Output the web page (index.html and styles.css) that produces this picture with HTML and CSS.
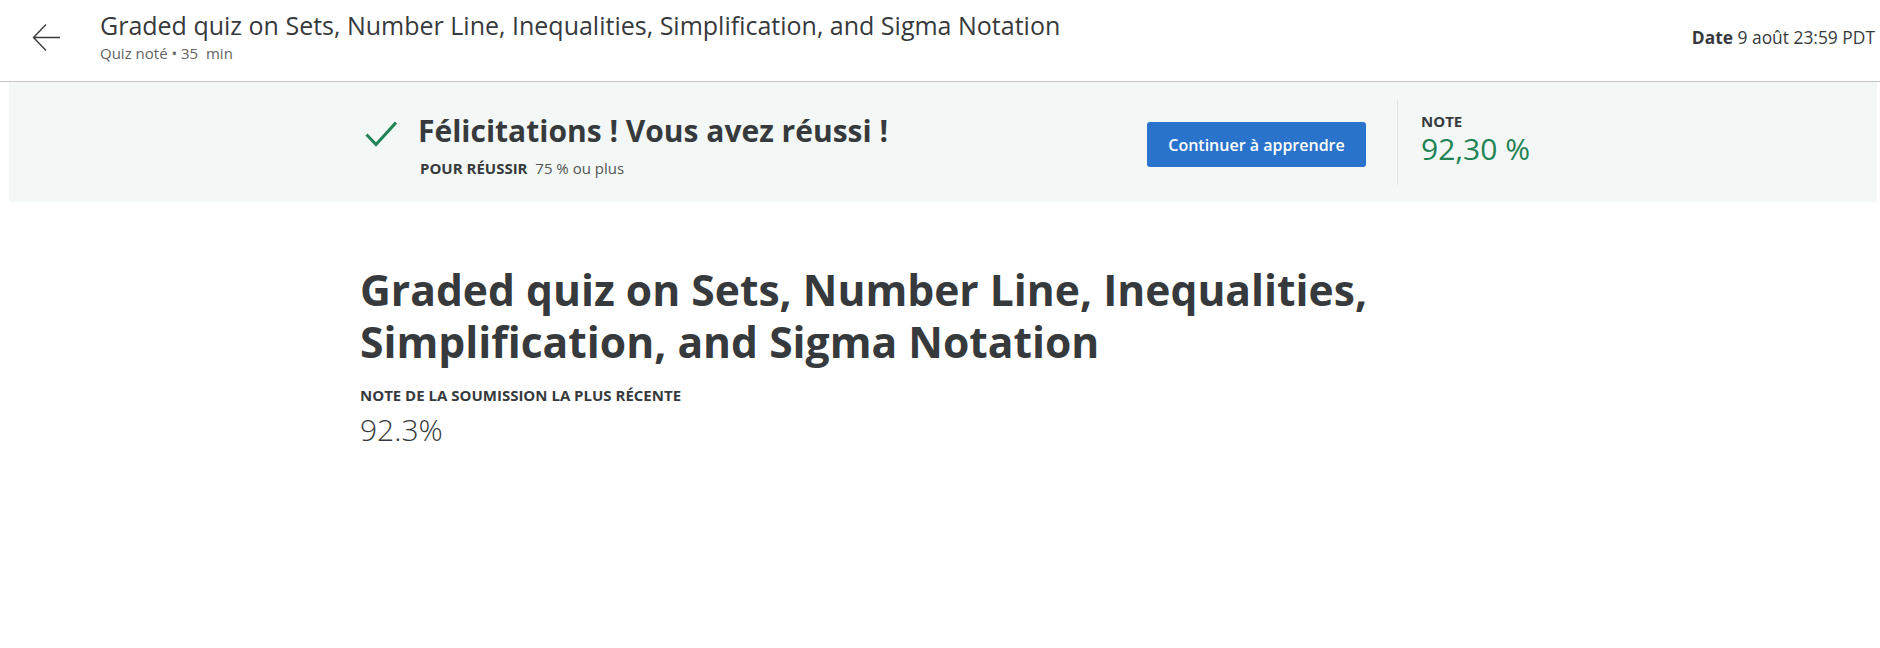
FILE: index.html
```html
<!DOCTYPE html>
<html lang="fr">
<head>
<meta charset="utf-8">
<title>Graded quiz</title>
<link rel="stylesheet" href="styles.css">
</head>
<body>
<header class="topbar">
  <a class="back" href="#" aria-label="Retour">
    <svg width="29" height="29" viewBox="0 0 29 29"><path d="M28 14.5H1.5M14 1.5L1.5 14.5L14 27.5" fill="none" stroke="#3a3a3a" stroke-width="1.4"/></svg>
  </a>
  <div class="titles">
    <div class="quiz-title">Graded quiz on Sets, Number Line, Inequalities, Simplification, and Sigma Notation</div>
    <div class="quiz-meta">Quiz noté • 35&nbsp; min</div>
  </div>
  <div class="due"><b>Date</b> 9 août 23:59 PDT</div>
</header>

<section class="banner">
  <div class="banner-inner">
    <div class="pass">
      <svg class="check" width="32" height="26" viewBox="0 0 32 26"><path d="M1.5 13.5L11 23.5L31 1.5" fill="none" stroke="#1f8354" stroke-width="3"/></svg>
      <div class="pass-text">
        <div class="pass-title">Félicitations ! Vous avez réussi !</div>
        <div class="pass-sub"><b>POUR RÉUSSIR</b>&nbsp; 75 % ou plus</div>
      </div>
    </div>
    <button class="cta">Continuer à apprendre</button>
    <div class="grade">
      <div class="label">NOTE</div>
      <div class="grade-value">92,30 %</div>
    </div>
  </div>
</section>

<main class="content">
  <h1 class="page-title">Graded quiz on Sets, Number Line, Inequalities, Simplification, and Sigma Notation</h1>
  <div class="label recent">NOTE DE LA SOUMISSION LA PLUS RÉCENTE</div>
  <div class="recent-value">92.3%</div>
</main>
</body>
</html>
```

FILE: styles.css
```css
html, body {
  margin: 0;
  padding: 0;
  background: #ffffff;
  font-family: "Open Sans", "Noto Sans", sans-serif;
  color: #373a3c;
}

.topbar {
  display: flex;
  align-items: flex-start;
  height: 82px;
  box-sizing: border-box;
  padding: 9px 5px 0 32px;
  border-bottom: 1px solid #c4c4c4;
}

.back {
  display: block;
  width: 29px;
  height: 29px;
  margin-top: 14px;
  margin-right: 39px;
}
.back svg { display: block; }

.titles {
  display: flex;
  flex-direction: column;
}

.quiz-title {
  font-size: 25px;
  line-height: 33px;
  font-weight: 400;
  color: #373a3c;
}

.quiz-meta {
  font-size: 15px;
  line-height: 19px;
  margin-top: 2px;
  color: #636363;
}

.due {
  margin-left: auto;
  margin-top: 17px;
  font-size: 17.4px;
  line-height: 22px;
  color: #373a3c;
}
.due b { font-weight: 700; }

.banner {
  margin: 0 3px 0 9px;
  height: 120px;
  background: #f3f8f6;
}

.banner-inner {
  display: flex;
  align-items: center;
  height: 100%;
  padding-left: 356px;
}

.pass {
  display: flex;
  align-items: flex-start;
  width: 782px;
  margin-top: 3px;
}

.check {
  display: block;
  margin-top: 11px;
  margin-right: 21px;
}

.pass-title {
  font-size: 30px;
  line-height: 41px;
  font-weight: 700;
  color: #373a3c;
}

.pass-sub {
  margin-top: 8px;
  padding-left: 2px;
  font-size: 15px;
  line-height: 19px;
  color: #545454;
}
.pass-sub b {
  font-weight: 700;
  color: #373a3c;
}

.cta {
  flex: none;
  width: 219px;
  height: 45px;
  margin-top: 5px;
  border: 0;
  border-radius: 3px;
  background: #2a73cc;
  color: #ffffff;
  font-family: inherit;
  font-size: 16px;
  font-weight: 600;
  cursor: pointer;
}

.grade {
  align-self: stretch;
  margin: 18px 0 17px 31px;
  padding: 12px 0 0 23px;
  border-left: 1px solid #dfe3e2;
}

.label {
  font-size: 15px;
  line-height: 19px;
  font-weight: 700;
  color: #373a3c;
}

.grade-value {
  font-size: 30px;
  line-height: 36px;
  color: #1f8354;
}

.content {
  width: 1160px;
  margin: 0 auto;
  padding-top: 61px;
}

.page-title {
  margin: 0;
  font-size: 42.6px;
  line-height: 52px;
  font-weight: 700;
  color: #373a3c;
}

.recent {
  margin-top: 19px;
}

.recent-value {
  margin-top: 6px;
  font-size: 30px;
  line-height: 38px;
  font-weight: 300;
  color: #373a3c;
}
```
